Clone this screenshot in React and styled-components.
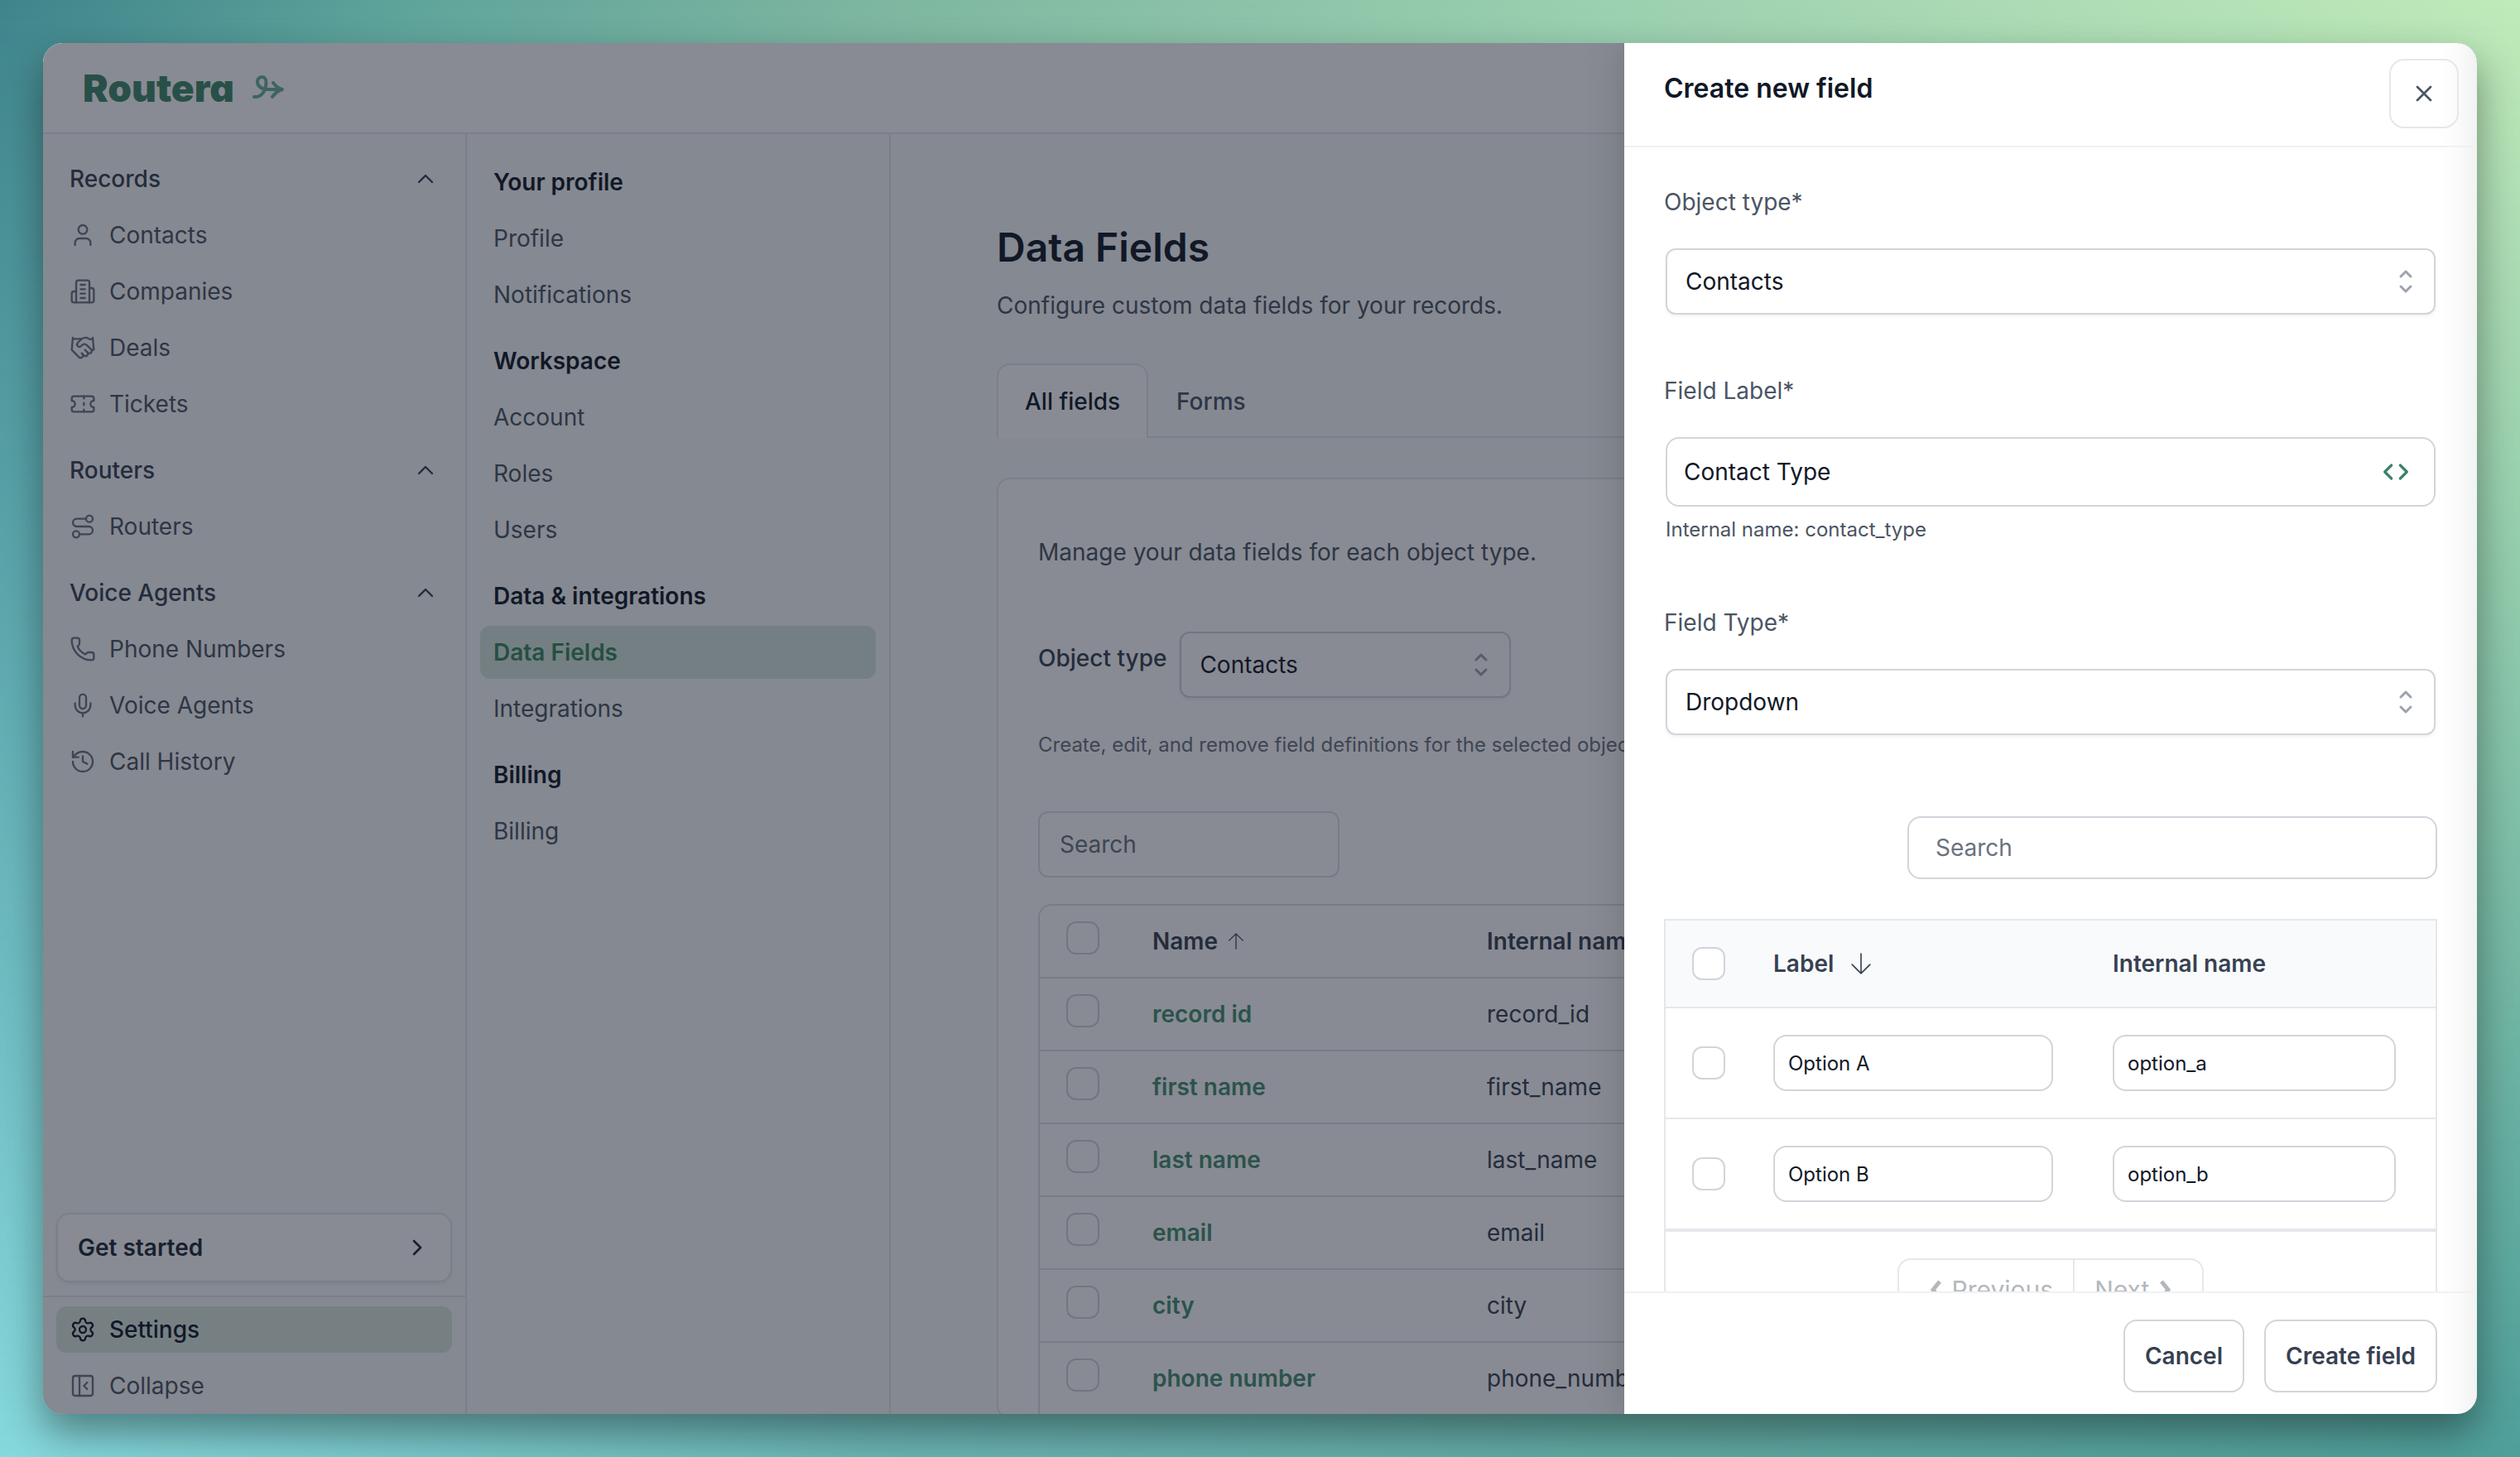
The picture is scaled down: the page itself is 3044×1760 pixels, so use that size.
import React, { useState } from 'react'
import styled, { createGlobalStyle } from 'styled-components'
import {
  ChevronRight, ChevronUp, Handshake, History, Mic, PanelLeftClose, Phone, Route, Settings, Ticket, User, X,
} from 'lucide-react'

const GlobalStyle = createGlobalStyle`
  *, *::before, *::after { box-sizing: border-box; }
  body { margin: 0; font-family: Inter, "Liberation Sans", sans-serif; font-size: 28px; line-height: 40px; color: #111827; }
  h1, h2, h3, p, ul { margin: 0; padding: 0; }
  ul { list-style: none; }
  a { color: inherit; text-decoration: none; }
  button, input, select { font: inherit; color: inherit; }
  svg { flex: none; display: block; }
`

// icons that lucide has not got in this form
const BuildingIcon = () => (
  <svg width="32" height="32" viewBox="0 0 24 24" fill="none" stroke="currentColor" strokeWidth="1.75" strokeLinecap="round" strokeLinejoin="round">
    <path d="M6 22V4a2 2 0 0 1 2-2h8a2 2 0 0 1 2 2v18Z" />
    <path d="M6 12H4a2 2 0 0 0-2 2v6a2 2 0 0 0 2 2h2" />
    <path d="M18 9h2a2 2 0 0 1 2 2v9a2 2 0 0 1-2 2h-2" />
    <path d="M10 6h4M10 10h4M10 14h4M10 18h4" />
  </svg>
)

const LogoArrow = () => (
  <svg width="40" height="30" viewBox="0 0 40 30" fill="none" stroke="#6bb097" strokeWidth="4" strokeLinecap="round" strokeLinejoin="round">
    <path d="M2 26C10 27 16 20 16.5 9C16.5 4 14 2 11.5 2C8 2 5.5 5 6 9C7 14 12 17 20 17H35" />
    <path d="M25 9Q29 15 36 17Q29 19 24 26" />
  </svg>
)

const CodeIcon = () => (
  <svg width="32" height="32" viewBox="0 0 24 24" fill="none" stroke="#3b8266" strokeWidth="2.4" strokeLinecap="round" strokeLinejoin="round">
    <path d="M16 18l6-6-6-6M8 6l-6 6 6 6" />
  </svg>
)

const UpDownIcon = () => (
  <svg width="40" height="40" viewBox="0 0 20 20" fill="none" stroke="#9ca3af" strokeWidth="1.5" strokeLinecap="round" strokeLinejoin="round">
    <path d="M7 7l3-3 3 3m0 6l-3 3-3-3" />
  </svg>
)

const SortArrow = ({ size, down }) => (
  <svg width={size} height={size} viewBox="0 0 24 24" fill="none" stroke="currentColor" strokeWidth="1.5" strokeLinecap="round" strokeLinejoin="round">
    <path d={down ? 'M12 1v22M2 13l10 10 10-10' : 'M12 23V1M2 11L12 1l10 10'} />
  </svg>
)

const Backdrop = styled.div`
  position: relative;
  min-height: 100vh;
  padding: 52px;
  background: linear-gradient(to right, #86d9dd, #6cb5b6 35%, #62a9a3 65%, #4f9f9b);

  &::before {
    content: '';
    position: absolute;
    inset: 0;
    background: linear-gradient(to right, #3f848b, #5fa39a 16%, #7eb6a0 35%, #9cd0b0 64%, #c0eab9);
    mask-image: linear-gradient(to bottom, #000, transparent);
  }
`

const AppWindow = styled.div`
  position: relative;
  display: flex;
  flex-direction: column;
  height: calc(100vh - 104px);
  overflow: hidden;
  border-radius: 24px;
  background: #f9fafb;
  box-shadow: 0 22px 48px rgba(0, 0, 0, 0.4);
`

const TopBar = styled.header`
  display: flex;
  align-items: center;
  gap: 22px;
  height: 110px;
  flex: none;
  padding: 0 48px;
  border-bottom: 2px solid #e5e7eb;
  background: #fff;
`

const Wordmark = styled.span`
  font-weight: 900;
  font-size: 46px;
  line-height: 56px;
  font-feature-settings: 'cv11';
  color: #3f8868;
`

const Columns = styled.div`
  display: flex;
  flex: 1;
  min-height: 0;
`

const Sidebar = styled.nav`
  display: flex;
  flex-direction: column;
  width: 512px;
  flex: none;
  border-right: 2px solid #e5e7eb;
`

const SidebarGroups = styled.div`
  display: flex;
  flex-direction: column;
  gap: 24px;
  flex: 1;
  min-height: 0;
  padding: 26px 16px;
`

const Group = styled.div`
  display: flex;
  flex-direction: column;
  gap: ${({ $gap }) => $gap};
`

const GroupToggle = styled.button`
  display: flex;
  align-items: center;
  justify-content: space-between;
  height: 56px;
  padding: 0 16px;
  border: 0;
  background: none;
  font-weight: 500;
  color: #374151;
`

const NavLink = styled.a`
  display: flex;
  align-items: center;
  gap: 16px;
  height: 56px;
  padding: 0 16px;
  border-radius: 12px;
  font-weight: ${({ $active }) => ($active ? 500 : 400)};
  color: ${({ $active }) => ($active ? '#111827' : '#4b5563')};
  background: ${({ $active }) => ($active ? '#dbe8df' : 'none')};

  svg { color: ${({ $active }) => ($active ? '#111827' : '#6b7280')}; }
`

const GetStarted = styled.button`
  display: flex;
  align-items: center;
  justify-content: space-between;
  height: 84px;
  margin: 0 16px 16px;
  padding: 0 24px;
  border: 2px solid #e5e7eb;
  border-radius: 16px;
  background: #fff;
  box-shadow: 0 2px 4px rgba(0, 0, 0, 0.06);
  font-weight: 600;
  color: #1f2937;
`

const SidebarFooter = styled.div`
  display: flex;
  flex-direction: column;
  gap: 12px;
  padding: 11px 16px 6px;
  border-top: 2px solid #e5e7eb;
`

const SettingsNav = styled.nav`
  display: flex;
  flex-direction: column;
  gap: 16px;
  width: 512px;
  flex: none;
  padding: 26px 16px;
  border-right: 2px solid #e5e7eb;
`

const SettingsTitle = styled.h3`
  padding: 12px 16px;
  font-size: 28px;
  font-weight: 600;
`

const SettingsLink = styled.a`
  padding: 12px 16px;
  border-radius: 12px;
  font-weight: ${({ $active }) => ($active ? 600 : 400)};
  color: ${({ $active }) => ($active ? '#37885a' : '#4b5563')};
  background: ${({ $active }) => ($active ? '#d7e6df' : 'none')};
`

const Main = styled.main`
  flex: 1;
  min-width: 0;
  overflow: hidden;
  padding: 105px 128px 0;
`

const PageTitle = styled.h1`
  font-size: 48px;
  line-height: 64px;
  font-weight: 600;
`

const Lead = styled.p`
  margin-top: 18px;
  color: #4b5563;
`

const Tabs = styled.div`
  display: flex;
  margin-top: 50px;
  border-bottom: 2px solid #e5e7eb;
`

const Tab = styled.button`
  height: 90px;
  margin-bottom: -2px;
  padding: 0 32px;
  border: 2px solid ${({ $active }) => ($active ? '#e5e7eb' : 'transparent')};
  border-bottom: 0;
  border-radius: 16px 16px 0 0;
  background: ${({ $active }) => ($active ? '#fff' : 'none')};
  font-weight: 500;
  color: ${({ $active }) => ($active ? '#111827' : '#4b5563')};
`

const Card = styled.section`
  margin-top: 48px;
  padding: 68px 48px 0;
  border: 2px solid #e5e7eb;
  border-radius: 16px;
  background: #fff;
  color: #4b5563;
`

const FilterRow = styled.div`
  display: flex;
  gap: 16px;
  margin-top: 76px;
`

const FilterLabel = styled.label`
  padding-top: 12px;
  font-weight: 500;
  color: #374151;
`

const Hint = styled.p`
  font-size: 24px;
  line-height: 32px;
  color: #4b5563;
`

const CardHint = styled(Hint)`
  margin: 41px 0 64px;
  white-space: nowrap;
  color: #6b7280;
`

const SelectShell = styled.div`
  display: grid;
  align-items: center;
  width: ${({ $width }) => $width};

  select, svg { grid-area: 1 / 1; }
  svg { justify-self: end; margin-right: 16px; pointer-events: none; }
`

const Select = styled.select`
  appearance: none;
  width: 100%;
  height: 80px;
  padding: 0 22px;
  border: 2px solid #d1d5db;
  border-radius: 12px;
  background: #fff;
  box-shadow: 0 2px 4px rgba(0, 0, 0, 0.06);
  color: #111827;
`

const TextInput = styled.input`
  width: ${({ $width }) => $width || '100%'};
  height: ${({ $height }) => $height};
  padding: 0 ${({ $pad }) => $pad};
  border: 2px solid #d1d5db;
  border-radius: 16px;
  background: #fff;
  color: #111827;

  &::placeholder { color: #6b7280; opacity: 1; }
`

const CardSearch = styled(TextInput)`
  border-color: #dcdfe4;
  border-radius: 12px;
`

const CellInput = styled(TextInput)`
  display: block;
  font-size: 24px;
`

const Checkbox = styled.input`
  appearance: none;
  display: block;
  width: 40px;
  height: 40px;
  margin: 0;
  border: 2px solid #d1d5db;
  border-radius: 12px;
  background: #fff;
`

const Table = styled.table`
  width: 100%;
  table-layout: fixed;
  border-spacing: 0;
  text-align: left;

  th, td { padding: 0; }
  th { font-weight: 600; color: #374151; }
`

const FieldsTable = styled(Table)`
  margin-top: 32px;
  border: 2px solid #dfe1e5;
  border-radius: 16px 16px 0 0;
  color: #374151;

  th, td { height: 88px; border-bottom: 2px solid #dfe1e5; }
  input { margin: 0 0 8px 32px; }
`

const FieldLink = styled.a`
  font-weight: 600;
  color: #458e6f;
`

const SortHead = styled.span`
  display: flex;
  align-items: center;
  gap: ${({ $gap }) => $gap};
`

const Scrim = styled.div`
  position: absolute;
  inset: 0;
  background: rgba(17, 24, 39, 0.5);
`

const Drawer = styled.aside`
  position: absolute;
  inset: 0 0 0 auto;
  display: flex;
  flex-direction: column;
  width: min(1030px, 100%);
  background: linear-gradient(to left, #f1f2f2, #fbfbfb 24px, #fff 48px);
  box-shadow: 0 0 48px rgba(0, 0, 0, 0.16);
`

const DrawerHeader = styled.header`
  display: flex;
  justify-content: space-between;
  height: 126px;
  flex: none;
  padding: 19px 22px 0 48px;
  border-bottom: 2px solid #f0f1f2;
`

const DrawerTitle = styled.h2`
  padding-top: 12px;
  font-size: 32px;
  line-height: 48px;
  font-weight: 600;
`

const CloseButton = styled.button`
  display: grid;
  place-items: center;
  width: 84px;
  height: 84px;
  padding: 0;
  border: 2px solid #e5e7eb;
  border-radius: 18px;
  background: transparent;
  color: #4b5563;
`

const DrawerBody = styled.div`
  flex: 1;
  min-height: 0;
  overflow: hidden;
  padding: 46px 48px 0;
`

const Field = styled.div`
  display: flex;
  flex-direction: column;
  padding: 0 2px;
  margin-bottom: ${({ $after }) => $after};

  > label { margin: 0 -2px 36px; color: #4b5563; }
  ${Hint} { margin-top: 12px; }
`

const CodeShell = styled.div`
  display: grid;
  align-items: center;

  input, button { grid-area: 1 / 1; }
`

const CodeButton = styled.button`
  justify-self: end;
  margin-right: 32px;
  padding: 0;
  border: 0;
  background: none;
`

const SearchRow = styled.div`
  display: flex;
  justify-content: flex-end;
  margin-bottom: 48px;
`

const OptionsBox = styled.div`
  border: 2px solid #e5e7eb;
`

const OptionsTable = styled(Table)`
  th { height: 106px; background: #f9fafb; border-bottom: 2px solid #e5e7eb; }
  td { height: 134px; border-bottom: 2px solid #e5e7eb; }
  td:first-child input, th:first-child input { margin-left: 32px; }
`

const Pager = styled.div`
  display: flex;
  justify-content: center;
  padding: 32px 0;
  border-top: 2px solid #e5e7eb;
`

const PagerButton = styled.button`
  display: flex;
  align-items: center;
  gap: 12px;
  height: 76px;
  padding: 0 24px 0 36px;
  border: 2px solid #e5e7eb;
  border-radius: 16px 0 0 16px;
  background: #fff;
  font-size: 30px;
  color: #b4b7be;

  & + & { margin-left: -2px; border-radius: 0 16px 16px 0; padding: 0 36px 0 24px; }
`

const DrawerFooter = styled.footer`
  display: flex;
  justify-content: flex-end;
  gap: 24px;
  padding: 32px 48px 26px;
  border-top: 2px solid #f0f1f2;
`

const ActionButton = styled.button`
  height: 88px;
  padding: 0 24px;
  border: 2px solid #d1d5db;
  border-radius: 16px;
  background: #fff;
  font-weight: 600;
  color: #374151;
`

const groups = [
  { title: 'Records', items: [['Contacts', User], ['Companies', BuildingIcon], ['Deals', Handshake], ['Tickets', Ticket]] },
  { title: 'Routers', items: [['Routers', Route]] },
  { title: 'Voice Agents', items: [['Phone Numbers', Phone], ['Voice Agents', Mic], ['Call History', History]] },
]

const settings = [
  { title: 'Your profile', items: ['Profile', 'Notifications'] },
  { title: 'Workspace', items: ['Account', 'Roles', 'Users'] },
  { title: 'Data & integrations', items: ['Data Fields', 'Integrations'] },
  { title: 'Billing', items: ['Billing'] },
]

const fields = [
  ['record id', 'record_id'],
  ['first name', 'first_name'],
  ['last name', 'last_name'],
  ['email', 'email'],
  ['city', 'city'],
  ['phone number', 'phone_number'],
]

const SelectBox = ({ id, options, width = '100%' }) => (
  <SelectShell $width={width}>
    <Select id={id}>
      {options.map((option) => <option key={option}>{option}</option>)}
    </Select>
    <UpDownIcon />
  </SelectShell>
)

const CreateFieldDrawer = () => {
  const [label, setLabel] = useState('Contact Type')
  const [options, setOptions] = useState(['Option A', 'Option B'])
  const toInternal = (text) => text.toLowerCase().replace(/\s+/g, '_')

  const renameOption = (index, value) => {
    setOptions(options.map((item, i) => (i === index ? value : item)))
  }

  return (
    <Drawer aria-label="Create new field">
      <DrawerHeader>
        <DrawerTitle>Create new field</DrawerTitle>
        <CloseButton aria-label="Close"><X size={32} strokeWidth={2} /></CloseButton>
      </DrawerHeader>
      <DrawerBody>
        <Field $after="72px">
          <label htmlFor="object-type">Object type*</label>
          <SelectBox id="object-type" options={['Contacts', 'Companies', 'Deals', 'Tickets']} />
        </Field>
        <Field $after="76px">
          <label htmlFor="field-label">Field Label*</label>
          <CodeShell>
            <TextInput id="field-label" $height="84px" $pad="20px" value={label} onChange={(e) => setLabel(e.target.value)} />
            <CodeButton aria-label="Insert variable"><CodeIcon /></CodeButton>
          </CodeShell>
          <Hint>Internal name: {toInternal(label)}</Hint>
        </Field>
        <Field $after="98px">
          <label htmlFor="field-type">Field Type*</label>
          <SelectBox id="field-type" options={['Dropdown', 'Text', 'Number']} />
        </Field>
        <SearchRow>
          <TextInput $width="640px" $height="76px" $pad="32px" placeholder="Search" aria-label="Search options" />
        </SearchRow>
        <OptionsBox>
          <OptionsTable>
            <colgroup>
              <col width="130" />
              <col width="410" />
              <col />
            </colgroup>
            <thead>
              <tr>
                <th><Checkbox type="checkbox" aria-label="Select all options" /></th>
                <th><SortHead $gap="20px">Label <SortArrow size={26} down /></SortHead></th>
                <th>Internal name</th>
              </tr>
            </thead>
            <tbody>
              {options.map((option, index) => (
                <tr key={index}>
                  <td><Checkbox type="checkbox" aria-label={`Select ${option}`} /></td>
                  <td>
                    <CellInput $width="338px" $height="68px" $pad="16px" value={option} aria-label="Label" onChange={(e) => renameOption(index, e.target.value)} />
                  </td>
                  <td>
                    <CellInput $width="342px" $height="68px" $pad="16px" value={toInternal(option)} aria-label="Internal name" readOnly />
                  </td>
                </tr>
              ))}
            </tbody>
          </OptionsTable>
          <Pager>
            <PagerButton>
              <svg width="16" height="24" viewBox="0 0 16 24" fill="none" stroke="currentColor" strokeWidth="5"><path d="M13 2L5 12l8 10" /></svg>
              Previous
            </PagerButton>
            <PagerButton>
              Next
              <svg width="16" height="24" viewBox="0 0 16 24" fill="none" stroke="currentColor" strokeWidth="5"><path d="M3 2l8 10-8 10" /></svg>
            </PagerButton>
          </Pager>
        </OptionsBox>
      </DrawerBody>
      <DrawerFooter>
        <ActionButton>Cancel</ActionButton>
        <ActionButton>Create field</ActionButton>
      </DrawerFooter>
    </Drawer>
  )
}

const App = () => {
  return (
    <>
      <GlobalStyle />
      <Backdrop>
        <AppWindow>
          <TopBar>
            <Wordmark>Routera</Wordmark>
            <LogoArrow />
          </TopBar>
          <Columns>
            <Sidebar aria-label="Main">
              <SidebarGroups>
                {groups.map((group) => (
                  <Group key={group.title} $gap="12px">
                    <GroupToggle>{group.title}<ChevronUp size={32} strokeWidth={1.75} /></GroupToggle>
                    {group.items.map(([name, Icon]) => (
                      <NavLink key={name} href="#"><Icon size={32} strokeWidth={1.75} />{name}</NavLink>
                    ))}
                  </Group>
                ))}
              </SidebarGroups>
              <GetStarted>Get started<ChevronRight size={32} strokeWidth={2} /></GetStarted>
              <SidebarFooter>
                <NavLink href="#" $active><Settings size={32} strokeWidth={1.75} />Settings</NavLink>
                <NavLink href="#"><PanelLeftClose size={32} strokeWidth={1.75} />Collapse</NavLink>
              </SidebarFooter>
            </Sidebar>
            <SettingsNav aria-label="Settings">
              {settings.map((group) => (
                <Group key={group.title} $gap="4px">
                  <SettingsTitle>{group.title}</SettingsTitle>
                  {group.items.map((name) => (
                    <SettingsLink key={name} href="#" $active={name === 'Data Fields'}>{name}</SettingsLink>
                  ))}
                </Group>
              ))}
            </SettingsNav>
            <Main>
              <PageTitle>Data Fields</PageTitle>
              <Lead>Configure custom data fields for your records.</Lead>
              <Tabs>
                <Tab $active>All fields</Tab>
                <Tab>Forms</Tab>
              </Tabs>
              <Card>
                <p>Manage your data fields for each object type.</p>
                <FilterRow>
                  <FilterLabel htmlFor="filter-type">Object type</FilterLabel>
                  <SelectBox id="filter-type" width="400px" options={['Contacts', 'Companies', 'Deals', 'Tickets']} />
                </FilterRow>
                <CardHint>Create, edit, and remove field definitions for the selected object type.</CardHint>
                <CardSearch $width="364px" $height="80px" $pad="24px" placeholder="Search" aria-label="Search fields" />
                <FieldsTable>
                  <colgroup>
                    <col width="136" />
                    <col width="404" />
                    <col />
                  </colgroup>
                  <thead>
                    <tr>
                      <th><Checkbox type="checkbox" aria-label="Select all fields" /></th>
                      <th><SortHead $gap="12px">Name <SortArrow size={20} /></SortHead></th>
                      <th>Internal name</th>
                    </tr>
                  </thead>
                  <tbody>
                    {fields.map(([name, internal]) => (
                      <tr key={name}>
                        <td><Checkbox type="checkbox" aria-label={`Select ${name}`} /></td>
                        <td><FieldLink href="#">{name}</FieldLink></td>
                        <td>{internal}</td>
                      </tr>
                    ))}
                  </tbody>
                </FieldsTable>
              </Card>
            </Main>
          </Columns>
          <Scrim />
          <CreateFieldDrawer />
        </AppWindow>
      </Backdrop>
    </>
  )
}

export default App
